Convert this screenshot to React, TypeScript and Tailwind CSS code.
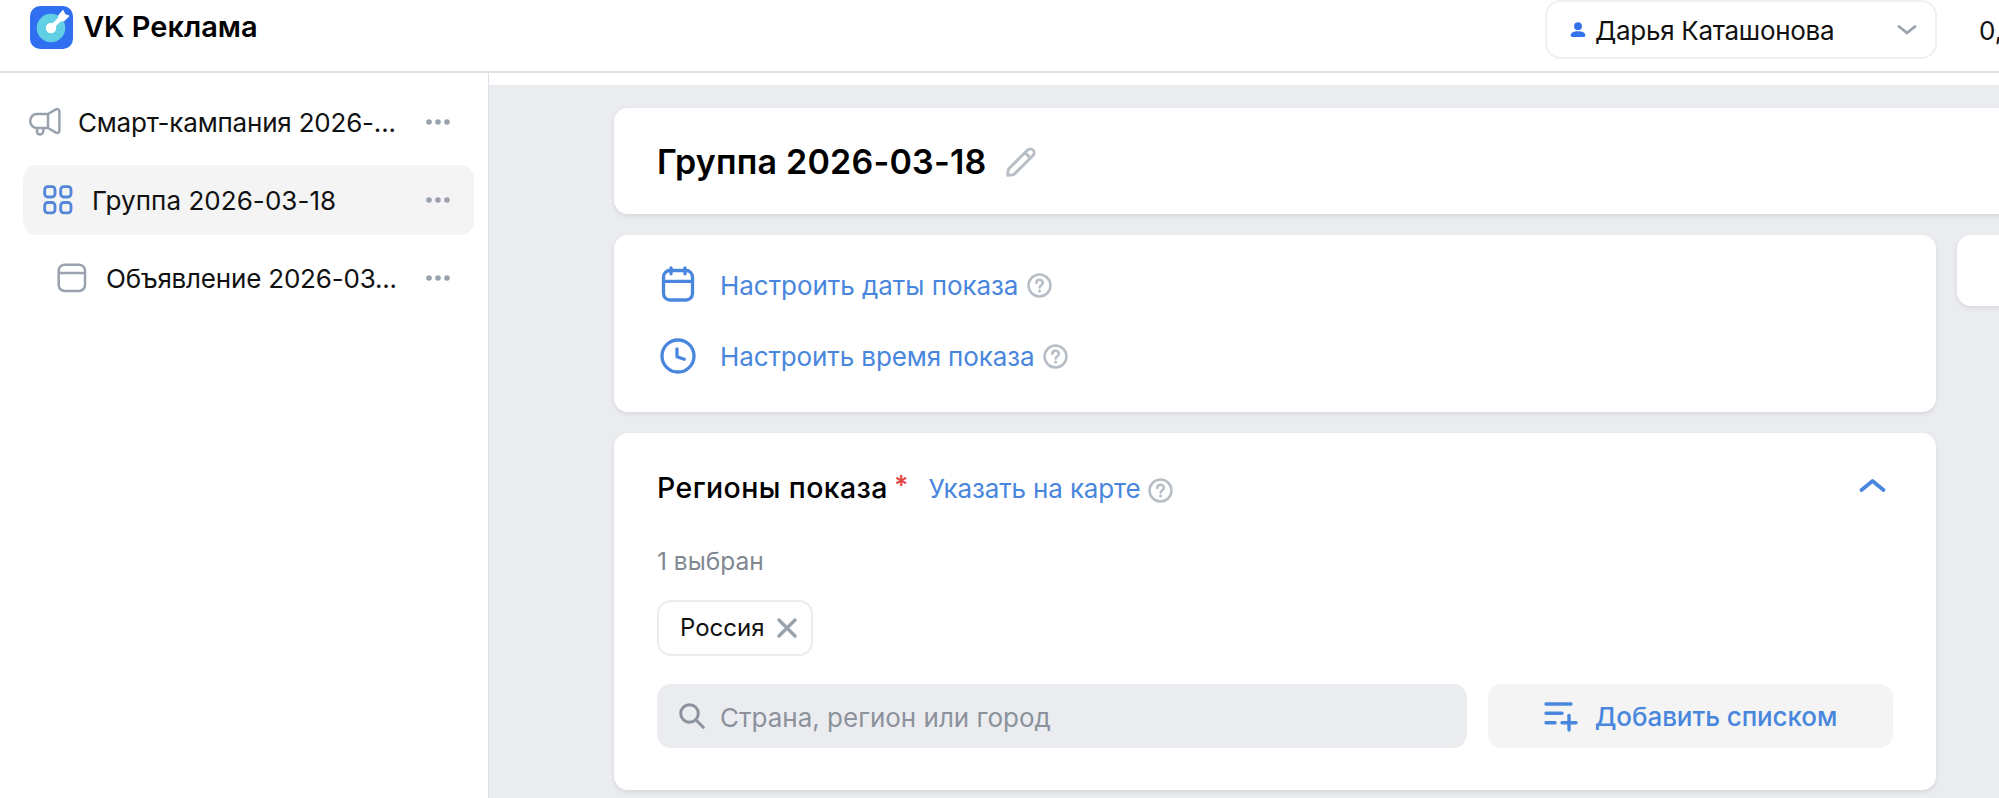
import type { ReactNode } from "react";

interface TreeItem {
  label: string;
  icon: ReactNode;
  className: string;
  labelClassName: string;
}

function LogoIcon() {
  return (
    <svg width="43" height="43" viewBox="0 0 43 43" fill="none" className="shrink-0">
      <rect width="43" height="43" rx="10" fill="#2f6ff0" />
      <circle cx="21" cy="22" r="14.3" fill="#62d0e4" />
      <path d="M21.5 21.5 31 12" stroke="#fff" strokeWidth="4.5" strokeLinecap="round" />
      <path d="M29 9.5 33 4.8 34.6 8.6 38.5 10 34 14.5 29 14.8Z" fill="#fff" stroke="#fff" strokeWidth="1.4" strokeLinejoin="round" />
      <circle cx="21" cy="22" r="5.2" fill="#fff" />
    </svg>
  );
}

function MegaphoneIcon() {
  return (
    <svg width="34" height="30" viewBox="0 0 34 30" fill="none" stroke="#99a2ad" strokeWidth="2.5" strokeLinejoin="round" strokeLinecap="round">
      <path d="M20 7H8.5a6.3 7 0 0 0 0 14H20M20 7v14M20 7l7.4-4.4c2-1.2 4-.3 4 2v18.8c0 2.3-2 3.2-4 2L20 21M9 21v3.2c0 4.3 6.3 4.3 6.3 0V21" />
    </svg>
  );
}

function GridIcon() {
  return (
    <svg width="30" height="30" viewBox="0 0 30 30" fill="none" stroke="#5186d8" strokeWidth="2.8">
      <rect x="1.7" y="1.7" width="10.3" height="10.3" rx="3" />
      <rect x="17.7" y="1.7" width="10.3" height="10.3" rx="3" />
      <rect x="1.7" y="17.5" width="10.3" height="10.3" rx="3" />
      <rect x="17.7" y="17.5" width="10.3" height="10.3" rx="3" />
    </svg>
  );
}

function BannerIcon() {
  return (
    <svg width="30" height="30" viewBox="0 0 30 30" fill="none" stroke="#99a2ad" strokeWidth="2.5">
      <rect x="1.7" y="1.7" width="26.3" height="26.3" rx="6" />
      <path d="M1.7 10h26.3" />
    </svg>
  );
}

function DotsIcon() {
  return (
    <svg width="24" height="6" viewBox="0 0 24 6" fill="#99a2ad" className="ml-auto">
      <circle cx="3" cy="3" r="2.8" />
      <circle cx="12" cy="3" r="2.8" />
      <circle cx="21" cy="3" r="2.8" />
    </svg>
  );
}

function UserIcon() {
  return (
    <svg width="16" height="16" viewBox="0 0 16 16" fill="#3472ee">
      <circle cx="8" cy="4.2" r="3.9" />
      <path d="M.7 13.2C.7 10.8 4 9.3 8 9.3s7.3 1.5 7.3 3.9c0 1.2-.7 1.8-1.9 1.8H2.6C1.4 15 .7 14.4.7 13.2Z" />
    </svg>
  );
}

function PencilIcon() {
  return (
    <svg width="30" height="30" viewBox="0 0 30 30" fill="none" stroke="#b8bec6" strokeWidth="2.9" strokeLinejoin="round" strokeLinecap="round">
      <path d="M1.7 28.3l.4-4.6c.1-.9.4-1.6 1-2.2L21.6 3a3.8 3.8 0 0 1 5.4 5.4L8.5 26.9c-.6.6-1.3.9-2.2 1ZM19 5.6l5.4 5.4" />
    </svg>
  );
}

function CalendarIcon() {
  return (
    <svg width="36" height="36" viewBox="0 0 36 36" fill="none" stroke="#4986dd" strokeWidth="3.3" strokeLinecap="round">
      <rect x="3.5" y="4.5" width="29" height="29.5" rx="6.5" />
      <path d="M3.5 15.3h29M11 1.8v6M25 1.8v6" />
    </svg>
  );
}

function ClockIcon() {
  return (
    <svg width="36" height="36" viewBox="0 0 36 36" fill="none" stroke="#4986dd" strokeWidth="3.3" strokeLinecap="round" strokeLinejoin="round">
      <circle cx="18" cy="18" r="16" />
      <path d="M17 11v7.7l7.3 2.6" />
    </svg>
  );
}

function HelpIcon() {
  return (
    <svg width="25" height="25" viewBox="0 0 26 26" fill="none" stroke="#b8bec6" strokeWidth="2.6" strokeLinecap="round">
      <circle cx="13" cy="13" r="11.4" />
      <path d="M9.7 10.3c0-4.4 6.8-4.3 6.8-.2 0 2.5-3.4 2.6-3.4 5" />
      <circle cx="13.1" cy="18.8" r="1.6" fill="#b8bec6" stroke="none" />
    </svg>
  );
}

function SearchIcon() {
  return (
    <svg width="28" height="28" viewBox="0 0 28 28" fill="none" stroke="#8b929c" strokeWidth="3" strokeLinecap="round">
      <circle cx="11.5" cy="11.5" r="8.8" />
      <path d="M18 18l7.3 7.3" />
    </svg>
  );
}

function ListAddIcon() {
  return (
    <svg width="34" height="32" viewBox="0 0 34 32" fill="none" stroke="#4986dd" strokeWidth="3.4" strokeLinecap="round">
      <path d="M2 4h25M2 13.3h16M2 22.7h9M18 22.7h14M25 15.5V30" />
    </svg>
  );
}

const treeItems: TreeItem[] = [
  {
    label: "Смарт-кампания 2026-...",
    icon: <MegaphoneIcon />,
    className: "pl-[5px]",
    labelClassName: "ml-[16px] tracking-[-0.2px]",
  },
  {
    label: "Группа 2026-03-18",
    icon: <GridIcon />,
    className: "bg-[#f4f4f4] pl-[20px]",
    labelClassName: "ml-[19px] tracking-[0.05px]",
  },
  {
    label: "Объявление 2026-03...",
    icon: <BannerIcon />,
    className: "pl-[34px]",
    labelClassName: "ml-[19px] tracking-[-0.2px]",
  },
];

const cardClass = "rounded-[14px] bg-white shadow-[0_2px_5px_rgba(0,0,0,0.09)]";

function Header() {
  return (
    <header className="flex h-[73px] shrink-0 items-start border-b-2 border-[#dfe2e2] bg-white pl-[30px]">
      <div className="flex h-[54px] items-center">
        <LogoIcon />
        <span className="ml-[10px] text-[29px] font-semibold text-black">VK Реклама</span>
      </div>
      <div className="ml-auto flex h-[59px] w-[392px] items-center rounded-[16px] border-2 border-[#f0f0f1] pr-[18px] pl-[23px]">
        <UserIcon />
        <span className="ml-[9px] pt-px text-[26px] tracking-[-0.3px]">Дарья Каташонова</span>
        <svg width="20" height="12" viewBox="0 0 20 12" fill="none" stroke="#99a2ad" strokeWidth="2.8" strokeLinecap="round" strokeLinejoin="round" className="ml-auto">
          <path d="M2 2.5l8 6.5 8-6.5" />
        </svg>
      </div>
      <div className="ml-[42px] w-[20px] overflow-hidden text-[26px] leading-[62px] whitespace-nowrap">0,</div>
    </header>
  );
}

function Sidebar() {
  return (
    <aside className="flex w-[489px] shrink-0 flex-col gap-[8px] border-r border-[#dfe1e6] bg-white pt-[14px] pr-[14px] pl-[23px]">
      {treeItems.map((item) => (
        <div key={item.label} className={`flex h-[70px] items-center rounded-[14px] pr-[24px] ${item.className}`}>
          {item.icon}
          <span className={`text-[26px] ${item.labelClassName}`}>{item.label}</span>
          <DotsIcon />
        </div>
      ))}
    </aside>
  );
}

function ScheduleCard() {
  return (
    <section className={`flex h-[177px] flex-col gap-[35px] pt-[32px] pl-[46px] ${cardClass}`}>
      <div className="flex h-[36px] items-center text-[#4986dd]">
        <span className="-mt-[2px]"><CalendarIcon /></span>
        <span className="ml-[24px] text-[26px] tracking-[-0.05px]">Настроить даты показа</span>
        <span className="ml-[9px]"><HelpIcon /></span>
      </div>
      <div className="flex h-[36px] items-center text-[#4986dd]">
        <ClockIcon />
        <span className="ml-[24px] text-[26px] tracking-[-0.12px]">Настроить время показа</span>
        <span className="ml-[9px]"><HelpIcon /></span>
      </div>
    </section>
  );
}

function RegionsCard() {
  return (
    <section className={`h-[357px] pt-[37px] pr-[43px] pl-[43px] ${cardClass}`}>
      <div className="flex h-[36px] items-center">
        <h2 className="text-[28.5px] font-medium tracking-[0.4px] text-black">Регионы показа</h2>
        <span className="ml-[6px] -mt-[3px] text-[27px] font-semibold text-[#e64646]">*</span>
        <span className="ml-[20px] text-[26px] tracking-[-0.15px] text-[#4986dd]">Указать на карте</span>
        <span className="ml-[7px] pt-[4px]"><HelpIcon /></span>
        <svg width="28" height="16" viewBox="0 0 28 16" fill="none" stroke="#4986dd" strokeWidth="3.7" strokeLinecap="round" strokeLinejoin="round" className="mr-[7px] mb-[6px] ml-auto">
          <path d="M3.5 13l11-9 11 9" />
        </svg>
      </div>
      <p className="mt-[37px] text-[24.5px] leading-[36px] text-[#818892]">1 выбран</p>
      <div className="mt-[21px] flex h-[56px] w-[156px] items-center rounded-[14px] border-2 border-[#ececee] pl-[21px]">
        <span className="text-[24px]">Россия</span>
        <svg width="20" height="20" viewBox="0 0 20 20" fill="none" stroke="#99a2ad" strokeWidth="3.4" strokeLinecap="round" className="ml-[12px]">
          <path d="M2 2l16 16M18 2L2 18" />
        </svg>
      </div>
      <div className="mt-[28px] flex h-[64px] gap-[21px]">
        <div className="flex w-[810px] items-center rounded-[14px] bg-[#ebecf0] pl-[21px] text-[#8b929c]">
          <SearchIcon />
          <span className="ml-[14px] pt-[2px] text-[26px]">Страна, регион или город</span>
        </div>
        <div className="flex flex-1 items-center justify-center rounded-[14px] bg-[#f4f4f4] text-[#4986dd]">
          <ListAddIcon />
          <span className="ml-[17px] text-[26px] font-medium tracking-[-0.08px]">Добавить списком</span>
        </div>
      </div>
    </section>
  );
}

export default function App() {
  return (
    <div className="flex h-[798px] w-[1999px] flex-col overflow-hidden bg-white font-['Inter','Liberation_Sans',sans-serif] text-[#111]">
      <Header />
      <div className="flex min-h-0 flex-1">
        <Sidebar />
        <div className="flex min-w-0 flex-1 flex-col">
          <div className="h-[12px] shrink-0" />
          <main className="flex-1 overflow-hidden bg-[#ebecf0] pt-[23px] pl-[125px]">
            <div className={`flex h-[106px] w-[1500px] items-center pt-px pl-[43px] ${cardClass}`}>
              <h1 className="text-[34px] font-semibold tracking-[0.2px] text-black">Группа 2026-03-18</h1>
              <span className="ml-[20px]"><PencilIcon /></span>
            </div>
            <div className="mt-[21px] flex items-start gap-[21px]">
              <div className="flex w-[1322px] shrink-0 flex-col gap-[21px]">
                <ScheduleCard />
                <RegionsCard />
              </div>
              <div className={`h-[71px] w-[300px] shrink-0 ${cardClass}`} />
            </div>
          </main>
        </div>
      </div>
    </div>
  );
}
